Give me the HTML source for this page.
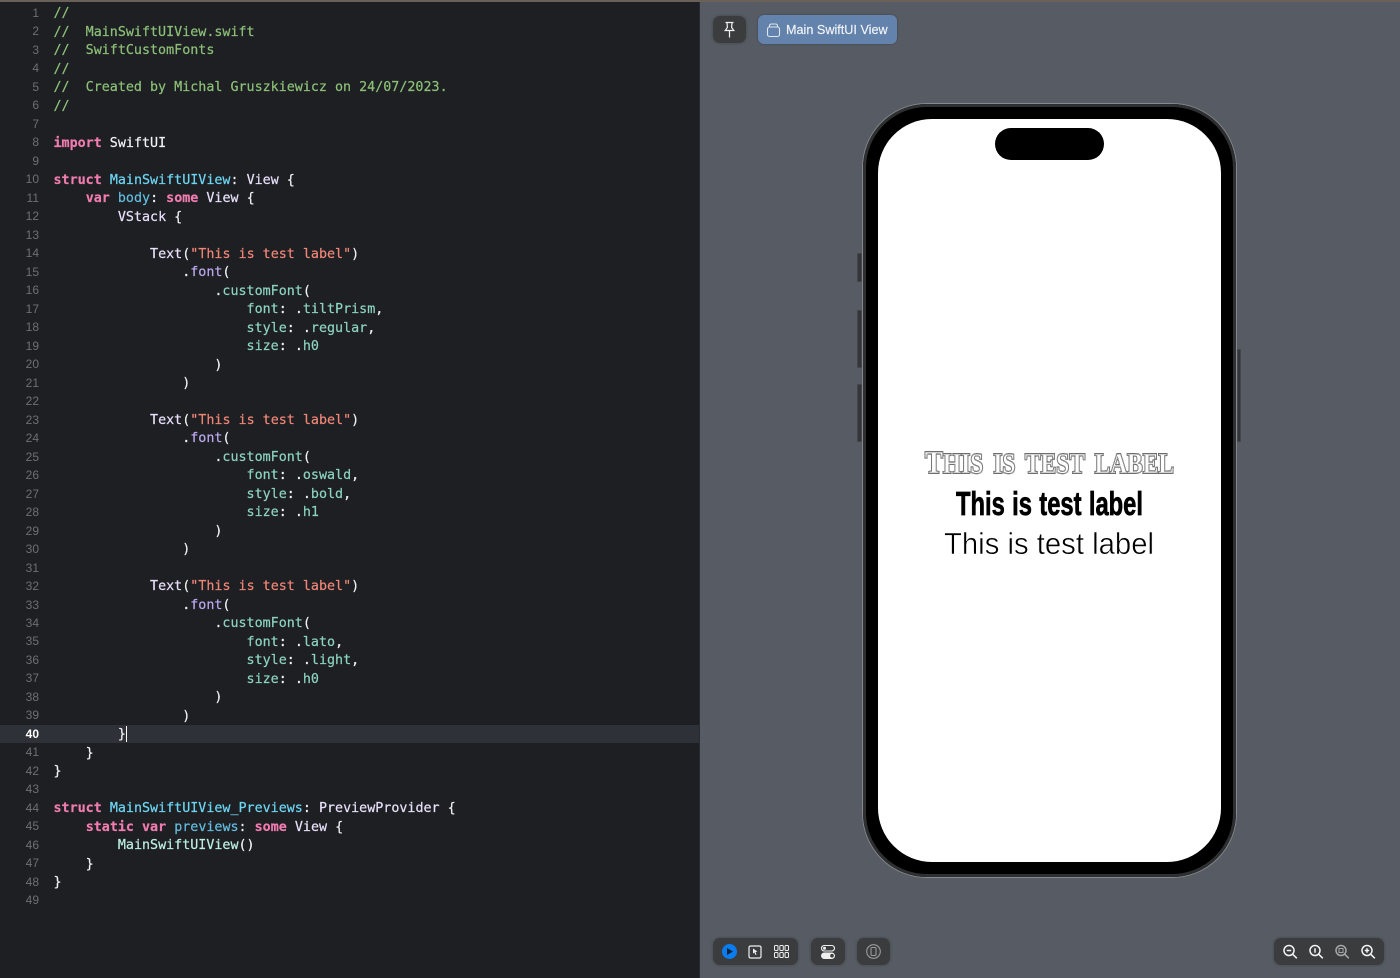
<!DOCTYPE html>
<html>
<head>
<meta charset="utf-8">
<style>
html,body{margin:0;padding:0;width:1400px;height:978px;overflow:hidden;background:#1e1f23}
#left{position:absolute;left:0;top:0;width:699px;height:978px;background:#1e1f23;overflow:hidden}
#right{position:absolute;left:699px;top:0;width:701px;height:978px;background:#575c64}
#divider{position:absolute;left:699px;top:0;width:1px;height:978px;background:#2a2b2f}
#topbar{position:absolute;left:0;top:0;width:1400px;height:2px;background:#6a6058}
#cur{position:absolute;left:0;top:725px;width:699px;height:18px;background:#2e3138}
#caret{position:absolute;left:126px;top:726px;width:1px;height:16px;background:#fff}
#nums{position:absolute;left:0;top:4px;width:39px;text-align:right;font:12px/18.48px "Liberation Sans",sans-serif;color:#6d6f74;white-space:pre}
#nums b{color:#fff;font-weight:bold}
#code{position:absolute;left:53.5px;top:5.3px;margin:0;font:13.36px/18.48px "DejaVu Sans Mono","Liberation Mono",monospace;color:#f2f2f6;white-space:pre;-webkit-text-stroke:.2px currentColor}
.c{color:#8cc078}.k{color:#f07cb0;font-weight:bold}.t{color:#6cd6f4}.b{color:#62bde0}.s{color:#f08676}.m{color:#bca9f0}.a{color:#8cd4be}.v{color:#e8e0fa}.n{color:#bcf0e0}
.tb{position:absolute;background:#3b3c3e;border-radius:7px;box-shadow:0 0 3px rgba(0,0,0,.25)}
svg{display:block}
#phone{position:absolute;left:862px;top:103px;width:375px;height:775px;box-sizing:border-box;border-radius:65px;background:#000;border:1px solid #85888c}
#rim{position:absolute;left:863px;top:104px;width:373px;height:773px;box-sizing:border-box;border-radius:64px;border:3.5px solid #2e2f31}
#screen{position:absolute;left:878px;top:119px;width:343px;height:743px;border-radius:54px;background:#fff}
#island{position:absolute;left:995px;top:128px;width:109px;height:32px;border-radius:16px;background:#000}
.btn{position:absolute;background:#33353b;border:1px solid #44464c;box-sizing:border-box}
</style>
</head>
<body>
<div id="left">
<div id="cur"></div>
<div id="caret"></div>
<div id="nums">1
2
3
4
5
6
7
8
9
10
11
12
13
14
15
16
17
18
19
20
21
22
23
24
25
26
27
28
29
30
31
32
33
34
35
36
37
38
39
<b>40</b>
41
42
43
44
45
46
47
48
49</div>
<pre id="code"><span class="c">//</span>
<span class="c">//  MainSwiftUIView.swift</span>
<span class="c">//  SwiftCustomFonts</span>
<span class="c">//</span>
<span class="c">//  Created by Michal Gruszkiewicz on 24/07/2023.</span>
<span class="c">//</span>

<span class="k">import</span> SwiftUI

<span class="k">struct</span> <span class="t">MainSwiftUIView</span>: <span class="v">View</span> {
    <span class="k">var</span> <span class="b">body</span>: <span class="k">some</span> <span class="v">View</span> {
        <span class="v">VStack</span> {

            <span class="v">Text</span>(<span class="s">"This is test label"</span>)
                .<span class="m">font</span>(
                    .<span class="a">customFont</span>(
                        <span class="a">font</span>: .<span class="a">tiltPrism</span>,
                        <span class="a">style</span>: .<span class="a">regular</span>,
                        <span class="a">size</span>: .<span class="a">h0</span>
                    )
                )

            <span class="v">Text</span>(<span class="s">"This is test label"</span>)
                .<span class="m">font</span>(
                    .<span class="a">customFont</span>(
                        <span class="a">font</span>: .<span class="a">oswald</span>,
                        <span class="a">style</span>: .<span class="a">bold</span>,
                        <span class="a">size</span>: .<span class="a">h1</span>
                    )
                )

            <span class="v">Text</span>(<span class="s">"This is test label"</span>)
                .<span class="m">font</span>(
                    .<span class="a">customFont</span>(
                        <span class="a">font</span>: .<span class="a">lato</span>,
                        <span class="a">style</span>: .<span class="a">light</span>,
                        <span class="a">size</span>: .<span class="a">h0</span>
                    )
                )
        }
    }
}

<span class="k">struct</span> <span class="t">MainSwiftUIView_Previews</span>: <span class="v">PreviewProvider</span> {
    <span class="k">static</span> <span class="k">var</span> <span class="b">previews</span>: <span class="k">some</span> <span class="v">View</span> {
        <span class="n">MainSwiftUIView</span>()
    }
}
</pre>
</div>
<div id="right"></div>
<div id="divider"></div>
<div id="topbar"></div>

<!-- pin button -->
<div class="tb" style="left:713px;top:16px;width:33px;height:27px">
<svg width="33" height="27" viewBox="0 0 33 27" fill="none" stroke="#f2f2f2" stroke-width="1.2"><path d="M12.5 6.5h8M14 6.5l.4 5-2.2 3h8.6l-2.2-3 .4-5M16.5 14.5v7"/></svg>
</div>
<!-- title chip -->
<div style="position:absolute;left:758px;top:15px;width:139px;height:29px;border-radius:6px;background:#6483ac;box-shadow:0 0 2px rgba(0,0,0,.3)">
<svg style="position:absolute;left:8px;top:7px" width="16" height="16" viewBox="0 0 16 16" fill="none" stroke="#dbe4f0" stroke-width="1.1"><rect x="1.5" y="5" width="12" height="9.5" rx="2"/><path d="M3.5 5V3.8Q3.5 2 5.5 2h4Q11.500 2 11.500 3.800V5" /></svg>
<div style="position:absolute;left:28px;top:.5px;height:29px;font:12.65px/29px 'Liberation Sans',sans-serif;color:#f1f4f8;white-space:nowrap;-webkit-text-stroke:.15px #f1f4f8">Main SwiftUI View</div>
</div>

<!-- side buttons -->
<div class="btn" style="left:857px;top:253px;width:5px;height:29px"></div>
<div class="btn" style="left:857px;top:310px;width:5px;height:58px"></div>
<div class="btn" style="left:857px;top:384px;width:5px;height:58px"></div>
<div class="btn" style="left:1237px;top:349px;width:4px;height:93px"></div>

<div id="phone"></div>
<div id="rim"></div>
<div id="screen"></div>
<div id="island"></div>

<!-- labels -->
<svg style="position:absolute;left:878px;top:430px" width="343" height="140" viewBox="0 0 343 140">
<g font-family="Liberation Serif, serif" font-weight="bold" font-size="28" word-spacing="5">
<text x="47" y="43" textLength="249" lengthAdjust="spacingAndGlyphs" fill="#fff" stroke="#333" stroke-width="1.9"><tspan font-size="32">T</tspan>HIS IS TEST LABEL</text>
<text x="47" y="43" textLength="249" lengthAdjust="spacingAndGlyphs" fill="#fff" stroke="#fff" stroke-width="1" aria-hidden="true"><tspan font-size="32">T</tspan>HIS IS TEST LABEL</text>
<text x="47" y="43" textLength="249" lengthAdjust="spacingAndGlyphs" fill="#fff" stroke="#555" stroke-width=".45" aria-hidden="true"><tspan font-size="32">T</tspan>HIS IS TEST LABEL</text>
</g>
<text x="78" y="85" textLength="187" lengthAdjust="spacingAndGlyphs" font-family="Liberation Sans Narrow, Liberation Sans, sans-serif" font-size="33" font-weight="bold" fill="#000" stroke="#000" stroke-width=".7" word-spacing="1">This is test label</text>
<text x="66" y="124" textLength="210" lengthAdjust="spacingAndGlyphs" font-family="Liberation Sans, sans-serif" font-size="31" fill="#000" stroke="#fff" stroke-width=".5" paint-order="fill stroke">This is test label</text>
</svg>

<!-- bottom toolbars -->
<div class="tb" style="left:713px;top:938px;width:85px;height:27px">
<svg width="85" height="27" viewBox="0 0 85 27">
<circle cx="16.500" cy="13.500" r="7.500" fill="#0a7cf0"/><path d="M14 10l6 3.500-6 3.500z" fill="#123"/>
<rect x="36" y="8" width="12" height="12" rx="1.500" fill="none" stroke="#f0f0f0" stroke-width="1.200"/><path d="M40 10.500l4.500 3-2 .5 1 2.500-1 .5-1-2.500-1.500 1z" fill="#f0f0f0"/>
<g fill="none" stroke="#eee" stroke-width="1"><rect x="61.500" y="7.500" width="3.500" height="5" rx="1"/><rect x="66.800" y="7.500" width="3.500" height="5" rx="1"/><rect x="72" y="7.500" width="3.500" height="5" rx="1"/><rect x="61.500" y="14.500" width="3.500" height="5" rx="1"/><rect x="66.800" y="14.500" width="3.500" height="5" rx="1"/><rect x="72" y="14.500" width="3.500" height="5" rx="1"/></g>
</svg></div>
<div class="tb" style="left:811px;top:938px;width:34px;height:27px">
<svg width="34" height="27" viewBox="0 0 34 27">
<rect x="10.500" y="7.500" width="13" height="5.500" rx="2.750" fill="none" stroke="#f0f0f0" stroke-width="1.100"/><circle cx="13.500" cy="10.200" r="1.500" fill="#f0f0f0"/>
<rect x="10" y="14.500" width="14" height="6.500" rx="3.250" fill="#f0f0f0"/><circle cx="21" cy="17.700" r="1.800" fill="#3b3c3e"/>
</svg></div>
<div class="tb" style="left:857px;top:938px;width:33px;height:27px">
<svg width="33" height="27" viewBox="0 0 33 27" fill="none" stroke="#9a9b9d" stroke-width="1.100"><circle cx="16.500" cy="13.500" r="6.800"/><rect x="14" y="9.500" width="5" height="8" rx="1.200"/></svg>
</div>
<div class="tb" style="left:1274px;top:938px;width:110px;height:27px">
<svg width="110" height="27" viewBox="0 0 110 27" fill="none" stroke="#f2f2f2" stroke-width="1.500">
<circle cx="15" cy="12.500" r="5"/><path d="M18.800 16.300l4 4M12.800 12.500h4.400"/>
<circle cx="41" cy="12.500" r="5"/><path d="M44.800 16.300l4 4M41 10.300v4.500"/>
<g stroke="#a5a6a8"><circle cx="67" cy="12.500" r="5"/><path d="M70.800 16.300l4 4"/><rect x="65" y="10.500" width="4" height="4" stroke-width="1"/></g>
<circle cx="93" cy="12.500" r="5"/><path d="M96.800 16.300l4 4M90.800 12.500h4.400M93 10.300v4.400"/>
</svg></div>
</body>
</html>
